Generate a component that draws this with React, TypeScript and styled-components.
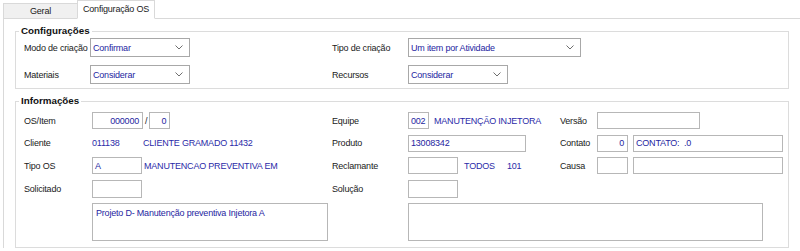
import React from 'react';
import styled, { createGlobalStyle } from 'styled-components';

const GlobalStyle = createGlobalStyle`
    html, body {
        margin: 0;
        padding: 0;
        background: #ffffff;
    }
    body {
        width: 800px;
        height: 251px;
        overflow: hidden;
        font-family: "Liberation Sans", Arial, sans-serif;
        font-size: 9px;
        letter-spacing: -0.2px;
        color: #1a1a1a;
    }
`;

const TabBar = styled.div`
    display: flex;
    align-items: flex-end;
    height: 19px;
    padding-left: 3px;
    margin-bottom: -1px;
    position: relative;
    z-index: 1;
`;

const Tab = styled.div<{ $active?: boolean }>`
    box-sizing: border-box;
    display: flex;
    align-items: center;
    justify-content: center;
    width: ${(p) => (p.$active ? '78px' : '74px')};
    height: ${(p) => (p.$active ? '19px' : '16px')};
    padding-bottom: ${(p) => (p.$active ? '2px' : '0')};
    border: 1px solid #d9d9d9;
    border-right: ${(p) => (p.$active ? '1px solid #d9d9d9' : 'none')};
    border-bottom-color: ${(p) => (p.$active ? '#ffffff' : '#d9d9d9')};
    background: ${(p) => (p.$active ? '#ffffff' : '#f0f0f0')};
    color: #1a1a1a;
`;

const Panel = styled.div`
    margin-left: 3px;
    border-top: 1px solid #d9d9d9;
    border-left: 1px solid #d9d9d9;
    padding: 6px 11px 0 11px;
    display: flex;
    flex-direction: column;
    gap: 6px;
`;

const Group = styled.fieldset<{ $pt: number; $pb: number }>`
    margin: 0;
    min-width: 0;
    border: 1px solid #dcdcdc;
    padding: ${(p) => p.$pt}px 8px ${(p) => p.$pb}px 8px;

    legend {
        margin-left: -5px;
        padding: 0 2px;
        font-weight: bold;
        font-size: 9.8px;
        line-height: 12px;
        letter-spacing: 0;
        color: #111111;
    }
`;

const ConfigGrid = styled.div`
    display: grid;
    grid-template-columns: 66px 242px 76px auto;
    grid-auto-rows: 19px;
    row-gap: 8px;
    align-items: center;
`;

const InfoGrid = styled.div`
    display: grid;
    grid-template-columns: 68px 240px 76px 152px 37px auto;
    grid-template-rows: 17px 17px 17px 18px 38px;
    row-gap: 5.5px;
    align-items: center;
`;

const Label = styled.div`
    white-space: nowrap;
    color: #1a1a1a;
`;

const Select = styled.div<{ $w: number }>`
    box-sizing: border-box;
    width: ${(p) => p.$w}px;
    height: 19px;
    border: 1px solid #a8a8a8;
    background: #ffffff;
    display: flex;
    align-items: center;
    justify-content: space-between;
    padding: 0 6px 0 2px;
    color: #25259f;
`;

const Chevron = () => (
    <svg width="8" height="5" viewBox="0 0 8 5">
        <polyline points="0.5,0.5 4,4 7.5,0.5" fill="none" stroke="#6e6e6e" strokeWidth="1" />
    </svg>
);

const Inline = styled.div<{ $gap: number }>`
    display: flex;
    align-items: center;
    gap: ${(p) => p.$gap}px;
    white-space: nowrap;
    height: 100%;
`;

const Box = styled.div<{ $w: number; $h?: number; $right?: boolean }>`
    box-sizing: border-box;
    width: ${(p) => p.$w}px;
    height: ${(p) => p.$h ?? 17}px;
    border: 1px solid #b7b7b7;
    background: #ffffff;
    display: flex;
    align-items: center;
    justify-content: ${(p) => (p.$right ? 'flex-end' : 'flex-start')};
    padding: 0 3px 0 2px;
    color: #25259f;
    white-space: nowrap;
    overflow: hidden;
`;

const Memo = styled.div<{ $w: number }>`
    box-sizing: border-box;
    width: ${(p) => p.$w}px;
    height: 38px;
    border: 1px solid #b7b7b7;
    background: #ffffff;
    padding: 4px 3px;
    color: #25259f;
    grid-column: ${(p) => (p.$w > 300 ? '4 / span 3' : '2')};
`;

const Value = styled.span<{ $w?: number }>`
    display: inline-block;
    width: ${(p) => (p.$w ? `${p.$w}px` : 'auto')};
    color: #2b2ba8;
`;

const Slash = styled.span`
    color: #1a1a1a;
`;

export default function App() {
    return (
        <>
            <GlobalStyle />
            <TabBar>
                <Tab>Geral</Tab>
                <Tab $active>Configuração OS</Tab>
            </TabBar>
            <Panel>
                <Group $pt={1} $pb={4}>
                    <legend>Configurações</legend>
                    <ConfigGrid>
                        <Label>Modo de criação</Label>
                        <Select $w={100}>
                            Confirmar
                            <Chevron />
                        </Select>
                        <Label>Tipo de criação</Label>
                        <Select $w={173}>
                            Um item por Atividade
                            <Chevron />
                        </Select>
                        <Label>Materiais</Label>
                        <Select $w={100}>
                            Considerar
                            <Chevron />
                        </Select>
                        <Label>Recursos</Label>
                        <Select $w={100}>
                            Considerar
                            <Chevron />
                        </Select>
                    </ConfigGrid>
                </Group>
                <Group $pt={5} $pb={6}>
                    <legend>Informações</legend>
                    <InfoGrid>
                        <Label>OS/Item</Label>
                        <Inline $gap={2}>
                            <Box $w={51} $right>000000</Box>
                            <Slash>/</Slash>
                            <Box $w={21} $right>0</Box>
                        </Inline>
                        <Label>Equipe</Label>
                        <Inline $gap={5}>
                            <Box $w={21}>002</Box>
                            <Value>MANUTENÇÃO INJETORA</Value>
                        </Inline>
                        <Label>Versão</Label>
                        <Box $w={103} />

                        <Label>Cliente</Label>
                        <Inline $gap={0}>
                            <Value $w={51}>011138</Value>
                            <Value>CLIENTE GRAMADO 11432</Value>
                        </Inline>
                        <Label>Produto</Label>
                        <Box $w={118}>13008342</Box>
                        <Label>Contato</Label>
                        <Inline $gap={5}>
                            <Box $w={31} $right>0</Box>
                            <Box $w={150}>CONTATO:&nbsp; .0</Box>
                        </Inline>

                        <Label>Tipo OS</Label>
                        <Inline $gap={2}>
                            <Box $w={50}>A</Box>
                            <Value>MANUTENCAO PREVENTIVA EM</Value>
                        </Inline>
                        <Label>Reclamante</Label>
                        <Inline $gap={6}>
                            <Box $w={50} />
                            <Value $w={37}>TODOS</Value>
                            <Value>101</Value>
                        </Inline>
                        <Label>Causa</Label>
                        <Inline $gap={5}>
                            <Box $w={31} />
                            <Box $w={150} />
                        </Inline>

                        <Label>Solicitado</Label>
                        <Box $w={50} $h={18} />
                        <Label>Solução</Label>
                        <Box $w={50} $h={18} />
                        <div />
                        <div />

                        <Memo $w={236}>Projeto D- Manutenção preventiva Injetora A</Memo>
                        <Memo $w={355} />
                    </InfoGrid>
                </Group>
            </Panel>
        </>
    );
}
